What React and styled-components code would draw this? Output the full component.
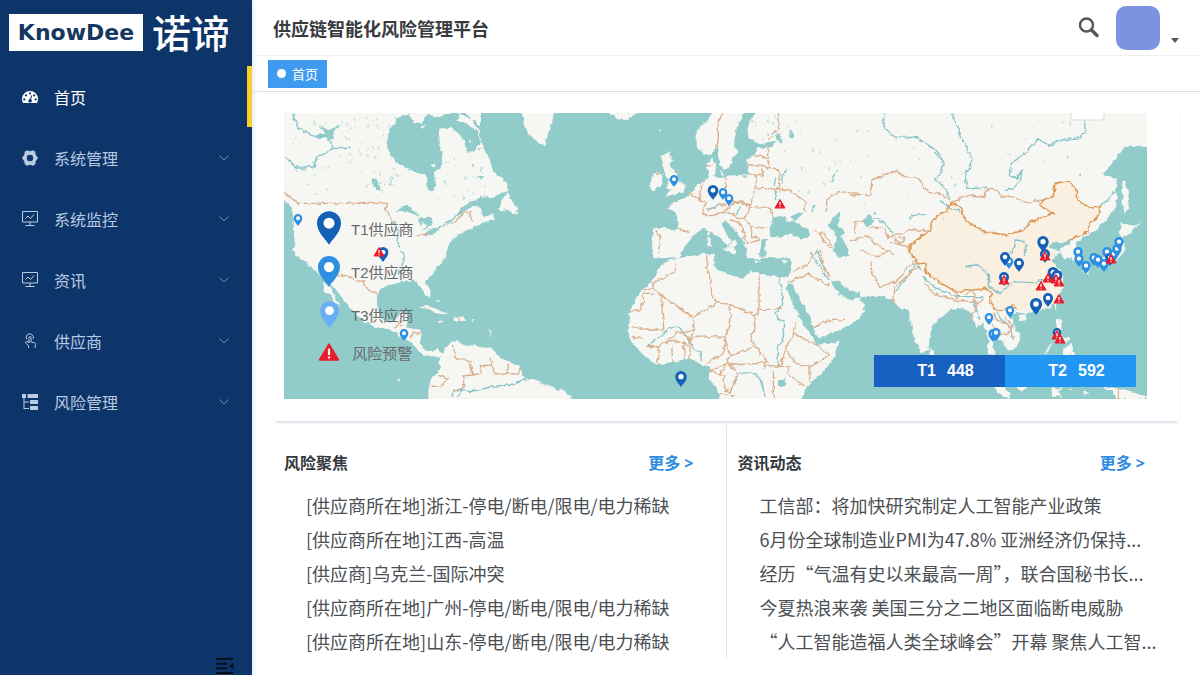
import styled, { createGlobalStyle } from "styled-components";

const GlobalStyle = createGlobalStyle`
  * {
    box-sizing: border-box;
  }

  body {
    margin: 0;
    background: #fff;
    color: #4c4f54;
    font-family: "Noto Sans", "Noto Sans CJK SC", sans-serif;
  }

  button {
    border: 0;
    padding: 0;
    background: none;
    font: inherit;
    color: inherit;
    cursor: pointer;
  }

  a {
    color: inherit;
    text-decoration: none;
  }

  ul {
    list-style: none;
    margin: 0;
    padding: 0;
  }

  svg {
    display: block;
  }
`;

const Layout = styled.div`
  display: grid;
  grid-template-columns: 252px minmax(0, 1fr);
  min-height: 100vh;
`;

/* ---------- sidebar ---------- */

const Sidebar = styled.aside`
  display: flex;
  flex-direction: column;
  background: #0e3569;
  box-shadow: 1px 0 6px #d5e9f5;
`;

const Brand = styled.a`
  display: flex;
  align-items: center;
  gap: 9px;
  height: 65px;
  margin-bottom: 1px;
  padding-left: 9px;
  color: #fff;
`;

const BrandBox = styled.span`
  display: flex;
  align-items: center;
  justify-content: center;
  width: 134px;
  height: 37px;
  background: #fff;
  color: #14365f;
  font: bold 22px "DejaVu Sans", sans-serif;
`;

const BrandName = styled.span`
  font-size: 39px;
  font-weight: 500;
  line-height: 40px;
`;

const MenuButton = styled.button`
  display: flex;
  align-items: center;
  gap: 16px;
  width: 100%;
  height: 61px;
  padding: 0 23px 0 22px;
  border-right: ${(p) => (p.$active ? "5px solid #f7d02c" : "0")};
  color: ${(p) => (p.$active ? "#fff" : "#b9cbe3")};
  font-size: 16px;
  text-align: left;

  span {
    flex: 1;
  }
`;

const Collapse = styled.button`
  align-self: flex-end;
  margin: auto 18px 2px 0;
  color: #05101f;
`;

/* ---------- header ---------- */

const Main = styled.main`
  display: flex;
  flex-direction: column;
  min-width: 0;
`;

const Header = styled.header`
  display: flex;
  align-items: center;
  height: 56px;
  padding: 0 21px;
  border-bottom: 1px solid #eef0f2;
`;

const Title = styled.h1`
  flex: 1;
  margin: 0;
  color: #383b40;
  font-size: 18px;
  font-weight: 700;
`;

const UserButton = styled.button`
  display: flex;
  align-items: flex-end;
  gap: 11px;
  margin-left: 17px;
`;

const Avatar = styled.span`
  width: 44px;
  height: 44px;
  border-radius: 10px;
  background: #7c94e0;
`;

const Caret = styled.span`
  margin-bottom: 7px;
  border: 4px solid transparent;
  border-top: 5px solid #55585e;
  border-bottom: 0;
`;

const Tabs = styled.nav`
  display: flex;
  align-items: center;
  height: 36px;
  padding-left: 16px;
  border-bottom: 1px solid #dcdfe3;
`;

const Tab = styled.a`
  display: flex;
  align-items: center;
  gap: 6px;
  height: 28px;
  padding: 0 9px;
  background: #3f9bf0;
  color: #fff;
  font-size: 13px;

  &::before {
    content: "";
    width: 9px;
    height: 9px;
    border-radius: 50%;
    background: #fff;
  }
`;

/* ---------- map ---------- */

const MapCard = styled.section`
  margin: 8px 21px 0 22px;
  padding: 13px 32px 22px 10px;
  border-radius: 4px;
  box-shadow: 0 3px 3px -1px #dddfe9;
`;

const MapFrame = styled.div`
  position: relative;
`;

const MapSvg = styled.svg`
  width: 100%;
  height: auto;
`;

const Legend = styled.ul`
  position: absolute;
  top: 98px;
  left: 32px;
  display: grid;
  grid-template-rows: 34px 40px 34px 30px;
  row-gap: 6px;
  align-items: center;
  color: #67696b;
  font: 15px "Liberation Sans", "Noto Sans CJK SC", sans-serif;

  li {
    display: grid;
    grid-template-columns: 26px auto;
    column-gap: 9px;
    align-items: center;
    justify-items: center;
  }
`;

const Totals = styled.div`
  position: absolute;
  right: 11px;
  bottom: 12px;
  display: flex;
`;

const Total = styled.button`
  display: flex;
  align-items: center;
  justify-content: center;
  gap: 11px;
  width: 131px;
  height: 32px;
  padding-left: 12px;
  background: ${(p) => p.$color};
  color: #fff;
  font: bold 16px "Liberation Sans", sans-serif;
`;

/* ---------- lists ---------- */

const Panels = styled.div`
  display: grid;
  grid-template-columns: 1fr 1fr;
  margin: 4px 23px 18px 22px;
`;

const Panel = styled.section`
  padding: 22px 32px 0 ${(p) => (p.$divided ? 11 : 10)}px;
  border-left: ${(p) => (p.$divided ? "1px solid #e3e5ee" : "0")};
  min-width: 0;
`;

const PanelHead = styled.div`
  display: flex;
  align-items: center;
  justify-content: space-between;
  height: 30px;
  margin-bottom: 11px;

  h2 {
    margin: 0;
    color: #34373c;
    font-size: 16px;
    font-weight: 700;
  }

  a {
    color: #2e8be0;
    font-size: 16px;
    font-weight: 700;
  }
`;

/* The CJK family leads here so that the curly quotes take a full width */
const NewsList = styled.ul`
  padding-left: 22px;
  font-family: "Noto Sans CJK SC", sans-serif;
  font-size: 18px;
  line-height: 34px;
  white-space: nowrap;
`;

const icons = {
  dashboard: (
    <path
      fill="currentColor"
      fillRule="evenodd"
      d="M8 2a8 8 0 0 0-8 8c0 1.500.4 3 1.200 4h13.600c.8-1 1.200-2.500 1.200-4a8 8 0 0 0-8-8ZM2.300 9.300a1.100 1.100 0 1 1 0 2.200 1.100 1.100 0 0 1 0-2.200Zm1.700-4a1.100 1.100 0 1 1 0 2.200 1.100 1.100 0 0 1 0-2.200ZM8 3.300a1.100 1.100 0 1 1 0 2.200 1.100 1.100 0 0 1 0-2.200Zm4.200 2a1.100 1.100 0 1 1 0 2.200 1.100 1.100 0 0 1 0-2.200Zm1.500 4a1.100 1.100 0 1 1 0 2.200 1.100 1.100 0 0 1 0-2.200ZM9.300 6.300l.9.3-1.100 3.700a1.800 1.800 0 1 1-1-.3Z"
    />
  ),
  gear: (
    <path
      fill="currentColor"
      fillRule="evenodd"
      d="M5 .3 8 1.300 11 .3l2.300 1.500.3 2.700L16 8l-2.400 3.500-.3 2.700L11 15.700 8 14.700l-3 1-2.300-1.500-.3-2.700L0 8l2.400-3.500.3-2.700ZM8 4.800a3.200 3.200 0 1 0 0 6.400 3.200 3.200 0 0 0 0-6.400Z"
    />
  ),
  monitor: (
    <path
      fill="none"
      stroke="currentColor"
      d="M.5.500h15v10.500H.5ZM8 11v3.500M3.500 14.500h9M3.500 7.500l2.500-2.500 2.500 2.500 3.500-4"
    />
  ),
  touch: (
    <path
      fill="none"
      stroke="currentColor"
      d="M4.800 6.500A3.600 3.600 0 1 1 11 6M7 10V4.500a1 1 0 0 1 2 0V9l3.500.8c1 .3 1.200 1 1 2l-.6 3.200M7 10V9L4.500 8.500c-1-.2-1.300.8-.7 1.500L6.500 13v2"
    />
  ),
  tree: (
    <path
      fill="currentColor"
      d="M0 0h4v4H2.500v3.500H7v1H2.500v5.500H7v1H1.500V4H0ZM5.500 0H16v4H5.500ZM8 6h8v4H8ZM8 12h8v4H8Z"
    />
  ),
};

const menu = [
  { label: "首页", icon: "dashboard", active: true },
  { label: "系统管理", icon: "gear" },
  { label: "系统监控", icon: "monitor" },
  { label: "资讯", icon: "monitor" },
  { label: "供应商", icon: "touch" },
  { label: "风险管理", icon: "tree" },
];

const risks = [
  "[供应商所在地]浙江-停电/断电/限电/电力稀缺",
  "[供应商所在地]江西-高温",
  "[供应商]乌克兰-国际冲突",
  "[供应商所在地]广州-停电/断电/限电/电力稀缺",
  "[供应商所在地]山东-停电/断电/限电/电力稀缺",
];

const news = [
  "工信部：将加快研究制定人工智能产业政策",
  "6月份全球制造业PMI为47.8% 亚洲经济仍保持...",
  "经历“气温有史以来最高一周”，联合国秘书长...",
  "今夏热浪来袭 美国三分之二地区面临断电威胁",
  "“人工智能造福人类全球峰会”开幕 聚焦人工智...",
];

// The world is split in sheets, each with its own origin, drawn at three units per map unit.
const sheets = [
  {
    x: 280,
    y: 105,
    land: "M0 0H600V100L612 130 630 165 640 200 662 215 682 235 682 258 640 275 600 280 570 290 545 312 525 335 545 325 580 302 598 310 610 335 640 330 640 345 600 355 580 368 545 385 510 410 495 455H50L45 430 40 340 35 305 12 285 0 280ZM680 262 695 285 712 310 705 328 690 318 655 315 668 285ZM718 0H826L815 60 800 90 797 124 775 112 745 90 735 60Z",
    water:
      "M320 110 330 70 355 40 385 24 400 50 425 55 445 24 470 40 500 24 540 24 530 45 565 62 595 80 600 110 585 140 565 143 552 110 530 78 510 68 478 72 475 110 487 150 482 190 465 205 468 240 458 262 440 245 438 210 400 200 350 170 325 140ZM540 24 560 24 590 65 600 80 600 60 585 50ZM115 62 145 75 182 62 158 85 163 104 128 98 98 92 138 85ZM272 218 290 222 302 252 286 252 278 238ZM343 318 382 298 420 335 385 322ZM415 340 448 335 460 355 430 378 438 358 425 350 418 368ZM428 392 458 370 492 362 460 386ZM590 215 615 212 600 226ZM452 180 468 176 460 190Z",
    islands: "M420 65 435 60 432 74ZM452 180 468 176 462 192ZM565 105 575 110 566 114Z",
    border: "M55 295H322L318 315 332 335 340 352M410 392 445 385M512 352 530 350 550 322 570 320 572 340 580 350M12 262 35 280 55 297",
    river: "M38 26 55 70 100 95 145 98 160 130 130 148 108 160 106 186 48 186 20 160M160 130 212 130M340 350 355 380 350 410 370 450M545 312 520 342 490 362M48 186 52 200",
  },
  {
    x: 280,
    y: 250,
    land: "M35-5H496L495 25 460 65 435 92 452 125 450 145 435 130 410 95 370 95 330 105 298 118 290 155 297 195 320 215 345 215 357 190 388 188 378 232 422 240 422 285 440 305 475 298 482 312 510 280 530 274 560 285 630 290 665 325 715 345 735 385 790 400 870 435V460H445V420L455 382 480 360 478 322 450 318 425 312 400 280 375 265 340 245 290 232 250 215 205 170 165 115 140 95 110 65 70 30ZM128 95 150 112 165 140 182 166 165 158 150 135 135 125ZM413 174 440 165 490 185 506 196 470 190 445 176ZM522 200 555 200 563 212 525 213ZM470 212 490 212 482 218ZM575 210 590 212 578 217ZM348 385 362 390 352 394ZM470 150 480 156 476 160ZM628 235 632 240 630 270Z",
    border:
      "M165 75 200 78 225 90 250 95 265 120 293 135M358 230 375 222M390 265 400 250 420 248M343 235 360 215M520 285 525 320 570 335 578 375 550 378 552 412 520 425M578 375 605 370 600 348 635 345 630 320M635 345 645 375 680 370 685 340M680 370 712 372 722 355M455 405 480 410 505 385 475 375M538 203V213",
    river: "M370 0 372 30 355 75M515 440 525 420 580 425 640 408 700 405 730 385 740 392M530 440 550 420",
  },
  {
    x: 560,
    y: 105,
    land: "M148 24H232L195 45 170 42ZM303 152 330 142 338 165 326 180 345 195 350 215 360 235 378 240 370 262 340 268 313 276 335 256 318 248 330 225 313 212 310 185ZM285 205 308 205 305 240 275 258 267 240ZM465 10 430 60 410 75 410 120 425 145 450 150 475 125 475 160 490 197 510 190 515 165 532 140 522 110 530 70 560 10ZM590 10 562 60 565 100 600 118 650 110 640 125 590 130 585 150 560 165 565 205 540 210 500 212 480 220 460 212 470 195 460 160 440 175 445 215 430 225 400 255 380 275 345 290 320 310 345 320 355 350 352 375 320 370 280 368 275 400 280 460H360L370 430 395 400 400 388 430 372 450 378 480 400 505 425 520 412 500 390 485 360 490 345 512 360 545 400 558 430 565 460H900V10ZM292 72 302 75 298 80ZM440 380 450 378 448 395ZM440 400 452 400 452 425 442 425ZM480 195 495 208 480 210ZM500 425 525 405 532 412 520 430Z",
    water:
      "M640 335 628 372 636 395 660 398 690 388 720 400 750 398 742 372 705 350 730 325 712 323 690 336 705 345 690 352 675 346 680 335ZM605 405 630 400 615 418 618 455H598ZM842 322 812 342 803 362 825 385 830 410 818 432 835 455H868L860 420 842 395 857 382 835 362ZM645 90 662 88 668 115 650 108ZM685 75 700 85 705 98 690 95ZM560 210 540 213 560 220Z",
    border:
      "M490 26 475 45 475 100 470 130M655 24 658 65 625 105M625 120 622 160 628 190 655 195 660 240 650 250 660 262M562 180 600 180 628 190M585 155 600 150 622 160M565 205 590 215 610 210 605 190M590 215 585 250 640 252 660 250M585 250 580 270 575 300 560 300 510 285 495 265 497 220M430 225 420 260 420 285 440 290 430 310 425 330 450 332 490 325 510 305 500 290M385 260 420 285M440 318 480 300 500 300M512 300 545 290 575 300 555 340 530 340 510 320 490 330M575 308 630 310 640 335M555 340 575 365 620 370M510 345 540 352 550 380 560 395 545 400M575 365 575 395 600 400M660 252 690 255 735 290 735 320M550 395 560 415 600 405M290 375 300 400 295 445M350 372 388 382M440 182H455M760 375 790 385 815 420M780 385 790 410 815 430M800 320 800 285 835 260 900 265M285 210 300 205",
    river: "M645 215 640 240M645 255 650 285M830 195 812 230M440 310 480 300M538 305 530 330M765 300 755 320M680 195 665 210 670 235",
  },
  {
    x: 560,
    y: 250,
    land: "M282-6H360L345 18 315 22 295 10ZM560-6H602L598 18 580 15ZM582 30 606 34 590 39ZM490-4 525-8 530 10 515 12ZM612-6H900V205L840 240 775 265 765 250 750 200 720 150 700 110 685 95 680 115 700 165 730 225 760 265 770 285 800 280 838 275 825 320 790 365 740 410 722 460H478L475 420 450 390 450 350 430 345 390 325 340 335 290 345 245 310 215 275 203 240 210 180 245 120 280 90 300 50 320 32 380 20 430 12 462 12 465 55 510 75 550 85 575 60 600 75 650 80 685 82 695 40 690 20 660 24 630 22ZM0 415 32 440 30 460H0ZM665 30 682 32 672 38Z",
    water:
      "M810 95 835 92 862 118 900 128V142L870 150 838 134ZM818-5H865V12H830ZM655 388 680 385 675 408 658 408ZM610 350 618 350 615 358Z",
    border:
      "M245 118H280L400 203 470 158 455 130 450 85 440 60 440 15M280 118 278 100 345 65 348 35M280 130H250V163H240V183H208M303 145 312 240H250L240 235 215 230M400 203 402 238 350 250 315 278M402 238 390 270 380 262 345 240M470 158 510 163 512 215 495 262 460 260 400 262 385 280M303 145 320 145M510 163 582 195 597 195V75M597 178H665M582 195 585 235 572 265 585 285 560 300 510 318 495 262M585 285 620 335 600 340 510 345 500 330 510 318M480 370 500 340 450 365M495 265 490 310 440 340M370 285 375 325M335 290 338 335M290 285 295 310 290 340M260 290 290 290 315 278 340 270 385 285M700 250 680 290 660 350 610 345M700 250 770 285M700 250 710 220M680 305 710 340 750 350 810 315 760 280M750 350 750 400M640 445 640 360M660 350 690 350 680 370 735 410M450 365 495 375 490 405 510 430 530 370M690 98 740 70 805 105M760 235 790 215 852 208M700 65 740 45 770 5M780 0 790 50 810 80M530 370 510 345M480 430 520 440M248 265 215 262M390 270 390 325",
    river: "M655 85 665 120 668 165 648 190 660 215 675 210 670 260 652 300 655 350M260 290 325 240 350 225 385 265 400 295 420 310 425 335M510 425 535 370 570 368 600 385 615 440M750 5 780 50 805 90M770 0 785 40 800 60",
  },
  {
    x: 850,
    y: 105,
    land: "M0 10H895V125H825L790 170 760 207 800 222 800 265 800 300 770 345 730 380 695 400 665 425 692 460H640L628 430 605 430 595 460H0ZM817 228 828 230 838 290 825 330 818 300ZM815 350 850 365 880 345 850 372 845 385 815 392 803 380 815 365Z",
    water: "M40 340 60 330 70 350 50 365 38 355ZM600 430 605 412 640 415 665 400 655 420 630 430Z",
    border:
      "M0 270 62 268 65 225 140 198 165 215 205 220 235 262 265 265 300 285M305 292 360 270 405 275 412 252 440 255 450 270 500 278 520 292 580 285M15 390V350L45 345M60 365 100 370 115 400 180 375 235 375M135 400 150 420 165 400 145 395M0 410 50 390 90 425 130 450M120 410 180 430",
    river: "M105 26 98 60 130 95 200 98 250 130 280 165 275 200 255 220 285 250 300 285M308 26 328 80 365 160 365 180 345 205 350 250 380 250 412 245M705 45 705 80 690 98 635 105 598 122 565 102 530 140 485 175 478 212 500 220 515 195 512 225 490 250 465 256M60 335 100 350 125 380 128 400M180 345 185 332 230 328M752 305 780 275 800 260 802 230M270 290 330 320M485 450 495 405 525 410 530 430 520 450M690 210 685 215",
  },
  {
    x: 850,
    y: 250,
    land: "M0-5H600L635 5 600 30 620 50 640 80 640 100 625 145 600 175 560 185 520 190 495 185 480 200 500 240 512 260 500 290 475 305 465 285 440 262 427 270 435 315 413 312 415 270 400 215 380 235 365 190 340 175 300 180 245 230 235 300 215 310 190 260 175 175 155 182 132 155 100 140 40 140 0 125ZM0 145 20 140 45 165 40 190 0 220ZM238 295 252 302 252 320 238 315ZM508 195 528 192 524 212 510 212ZM612 150 622 155 616 180ZM620 210 632 208 636 240 618 235ZM640 295 665 280 675 315H638ZM605 275 580 315 598 298ZM640 260 660 268 645 280ZM425 405H455L482 430 480 445 460 440ZM500 408 530 412 510 425ZM608 415H640L620 425 640 440H608ZM660 410 668 425 658 420ZM700 425 720 430 700 434ZM735 405 785 412 895 440V448H800L790 425ZM640-30 675-25 692 15 690 38 668 34 662 5ZM815-45 828 0 805 25 770 40 735 42 765 18 800-5ZM700 42 722 52 712 74 698 66Z",
    border:
      "M60 35 65 65 90 110 140 95 165 60 200 30M30 0 80 20 120 0M130 160 135 110 180 70 210 45M222 95 250 130 310 150 370 155M320 125 325 155M370 125 380 170 360 205M405 145 380 160M430 190 440 210 470 220 495 265M450 255 470 250 490 230 465 200M415 205 445 250M805 415V445M370 120 345 135",
    river: "M345 48 385 45 415 75 415 110 450 130 490 95 550 98 600 85M220 80 250 110 320 140 400 140M135 130 200 40 215 60M370 150 390 210M440 190 480 230 490 270M480 0 485 10",
  },
];

const chinaFill =
  "M180 450V420L240 375 245 350 265 330 290 320 305 292 335 310 345 345 385 370 400 380 470 390 520 375 545 350 610 325 570 305 580 285 610 275 615 235 650 228 675 245 685 285 720 310 752 305 740 340 718 355 715 380 680 395 655 410 605 412 595 435 635 443 600 465 620 485 640 535 622 580 600 607 560 618 500 615 490 603 440 620 420 590 424 565 405 550 370 555 320 560 270 535 230 505 225 480 200 470 190 450Z";

const chinaBorder =
  "M655 410 680 395 715 380 718 355 740 340 752 305 720 310 685 285 675 245 650 228 615 235 610 275 580 285 570 305 610 325 545 350 520 375 470 390 400 380 385 370 345 345 335 310 305 292 290 320 265 330 245 350 240 375 180 420V440L200 470 225 480 230 505 270 535 320 560 370 555 405 550 424 565 420 590 440 620 490 603 500 612";

// Small lakes, scattered with a fixed seed: [x, y, width, height, count]
const lakeFields = [
  [310, 116, 90, 75, 90],
  [420, 135, 75, 75, 50],
  [290, 118, 35, 80, 16],
  [748, 115, 32, 24, 26],
  [780, 118, 80, 75, 24],
  [860, 120, 120, 100, 24],
  [985, 120, 90, 50, 18],
];

let seed = 7;
const next = () => {
  seed = (seed * 16807) % 2147483647;
  return seed / 2147483647;
};

const lakes = lakeFields.flatMap(([x, y, w, h, n]) =>
  Array.from({ length: n }, () => ({
    x: x + next() * w,
    y: y + next() * h,
    dx: next() * 2 - 1,
    dy: next() * 3,
  }))
);

const pinColors = { t1: "#1661b8", t2: "#2d8fe2", t3: "#68aff5" };

const pins = [
  ["t2", 298, 226, 12],
  ["t1", 383, 262, 15],
  ["t2", 404, 341, 12],
  ["t2", 674, 187, 12],
  ["t1", 713, 200, 15],
  ["t2", 723, 200, 12],
  ["t2", 729, 206, 12],
  ["t1", 681, 387, 16],
  ["t1", 1043, 252, 16],
  ["t1", 1045, 263, 14],
  ["t2", 1009, 269, 12],
  ["t1", 1005, 266, 14],
  ["t1", 1019, 272, 14],
  ["t1", 1004, 286, 14],
  ["t1", 1053, 282, 15],
  ["t1", 1057, 285, 15],
  ["t1", 1036, 315, 17],
  ["t1", 1048, 307, 14],
  ["t2", 1010, 318, 12],
  ["t2", 989, 325, 12],
  ["t2", 993, 342, 13],
  ["t2", 996, 341, 13],
  ["t1", 1057, 340, 12],
  ["t2", 1078, 260, 13],
  ["t2", 1079, 267, 13],
  ["t2", 1086, 274, 13],
  ["t2", 1094, 266, 13],
  ["t2", 1098, 268, 13],
  ["t2", 1104, 272, 13],
  ["t2", 1107, 260, 13],
  ["t1", 1110, 266, 13],
  ["t2", 1114, 262, 13],
  ["t2", 1117, 257, 13],
  ["t2", 1119, 250, 13],
];

const warnings = [
  [379, 252],
  [780, 204],
  [1045, 256],
  [1004, 280],
  [1041, 286],
  [1048, 278],
  [1056, 279],
  [1059, 282],
  [1059, 299],
  [1057, 335],
  [1060, 339],
  [1111, 259],
];

// Pin with its tip at the origin, 14 units high
const Pin = ({ color }) => (
  <>
    <path
      fill={color}
      d="M0 0C-1-2-5-5-5-9a5 5 0 0 1 10 0C5-5 1-2 0 0Z"
    />
    <circle cy="-9" r="2.300" fill="#fff" />
  </>
);

const Warning = () => (
  <>
    <path
      fill="#ea1c2b"
      strokeLinejoin="round"
      stroke="#ea1c2b"
      d="M0-4.500 5 4H-5Z"
    />
    <path stroke="#fff" strokeWidth="1.200" d="M0-2V1.300M0 2.200V3.300" />
  </>
);

function Icon({ name }) {
  return (
    <svg width="16" height="16" viewBox="0 0 16 16" aria-hidden="true">
      {icons[name]}
    </svg>
  );
}

function Sheets({ part, ...rest }) {
  return (
    <g {...rest}>
      {sheets.map(
        (s) =>
          s[part] && (
            <path
              key={`${s.x}-${s.y}`}
              transform={`translate(${s.x} ${s.y}) scale(.33333)`}
              d={s[part]}
            />
          )
      )}
    </g>
  );
}

function WorldMap() {
  return (
    <MapSvg viewBox="284 113 863 286" role="img" aria-label="供应商分布">
      <filter id="rugged" x="0" y="0" width="100%" height="100%" colorInterpolationFilters="sRGB">
        <feTurbulence type="fractalNoise" baseFrequency=".18" numOctaves="2" seed="4" />
        <feDisplacementMap in="SourceGraphic" scale="5" xChannelSelector="R" yChannelSelector="G" />
        <feGaussianBlur stdDeviation=".35" />
      </filter>
      <rect x="284" y="113" width="863" height="286" fill="#91ccca" />
      <g filter="url(#rugged)" strokeLinejoin="round">
        <rect x="270" y="100" width="890" height="310" fill="#91ccca" />
        <Sheets part="land" fill="#f6f6f2" />
        <path
          transform="translate(850 105) scale(.33333)"
          fill="#faf0e2"
          d={chinaFill}
        />
        <Sheets part="water" fill="#91ccca" />
        <Sheets part="islands" fill="#f6f6f2" />
        <g stroke="#91ccca" strokeWidth=".8">
          {lakes.map((l, i) => (
            <path key={i} d={`M${l.x} ${l.y}l${l.dx} ${l.dy}`} />
          ))}
        </g>
        <Sheets part="river" fill="none" stroke="#86c3c9" strokeWidth="4" />
        <Sheets part="border" fill="none" stroke="#dab08e" strokeWidth="4" />
        <path
          transform="translate(850 105) scale(.33333)"
          fill="none"
          stroke="#dc9a55"
          strokeWidth="5"
          d={chinaBorder}
        />
      </g>
      <rect x="1071" y="105" width="33" height="15" rx="3" fill="#fff" stroke="#d8dad8" />
      {pins.map(([type, x, y, h]) => (
        <g key={`${x}-${y}`} transform={`translate(${x} ${y}) scale(${h / 14})`}>
          <Pin color={pinColors[type]} />
        </g>
      ))}
      {warnings.map(([x, y]) => (
        <g key={`${x}-${y}`} transform={`translate(${x} ${y})`}>
          <Warning />
        </g>
      ))}
    </MapSvg>
  );
}

function MapLegend() {
  return (
    <Legend>
      <li>
        <svg width="24" height="34" viewBox="-5 -14 10 14">
          <Pin color={pinColors.t1} />
        </svg>
        T1供应商
      </li>
      <li>
        <svg width="22" height="31" viewBox="-5 -14 10 14">
          <Pin color={pinColors.t2} />
        </svg>
        T2供应商
      </li>
      <li>
        <svg width="19" height="27" viewBox="-5 -14 10 14">
          <Pin color={pinColors.t3} />
        </svg>
        T3供应商
      </li>
      <li>
        <svg width="22" height="19" viewBox="-6 -5 12 10">
          <Warning />
        </svg>
        风险预警
      </li>
    </Legend>
  );
}

function NewsPanel({ title, items, divided }) {
  return (
    <Panel $divided={divided}>
      <PanelHead>
        <h2>{title}</h2>
        <a href="#more">更多 &gt;</a>
      </PanelHead>
      <NewsList>
        {items.map((item) => (
          <li key={item}>
            <a href="#detail">{item}</a>
          </li>
        ))}
      </NewsList>
    </Panel>
  );
}

function App() {
  return (
    <Layout>
      <GlobalStyle />
      <Sidebar>
        <Brand href="#home">
          <BrandBox>KnowDee</BrandBox>
          <BrandName>诺谛</BrandName>
        </Brand>
        <nav>
          {menu.map(({ label, icon, active }) => (
            <MenuButton key={label} $active={active}>
              <Icon name={icon} />
              <span>{label}</span>
              {!active && (
                <svg width="10" height="6" viewBox="0 0 10 6" fill="none" stroke="#7288a8">
                  <path d="M.5.5 5 5 9.500.5" />
                </svg>
              )}
            </MenuButton>
          ))}
        </nav>
        <Collapse aria-label="收起菜单">
          <svg width="18" height="16" viewBox="0 0 18 16" fill="currentColor">
            <path d="M0 0h17v2H0ZM0 4.700h11v2H0ZM0 9.300h11v2H0ZM0 14h17v2H0ZM17.500 4.500v7L13 8Z" />
          </svg>
        </Collapse>
      </Sidebar>
      <Main>
        <Header>
          <Title>供应链智能化风险管理平台</Title>
          <button aria-label="搜索">
            <svg width="21" height="21" viewBox="0 0 21 21" fill="none" stroke="#55585e">
              <circle cx="8.500" cy="8" r="6.500" strokeWidth="2.500" />
              <path d="m13.500 13 5.500 5.500" strokeWidth="3.500" strokeLinecap="round" />
            </svg>
          </button>
          <UserButton aria-label="用户菜单">
            <Avatar />
            <Caret />
          </UserButton>
        </Header>
        <Tabs>
          <Tab href="#home">首页</Tab>
        </Tabs>
        <MapCard>
          <MapFrame>
            <WorldMap />
            <MapLegend />
            <Totals>
              <Total $color="#1661c2">
                <span>T1</span>
                <span>448</span>
              </Total>
              <Total $color="#2196f3">
                <span>T2</span>
                <span>592</span>
              </Total>
            </Totals>
          </MapFrame>
        </MapCard>
        <Panels>
          <NewsPanel title="风险聚焦" items={risks} />
          <NewsPanel title="资讯动态" items={news} divided />
        </Panels>
      </Main>
    </Layout>
  );
}

export default App;
